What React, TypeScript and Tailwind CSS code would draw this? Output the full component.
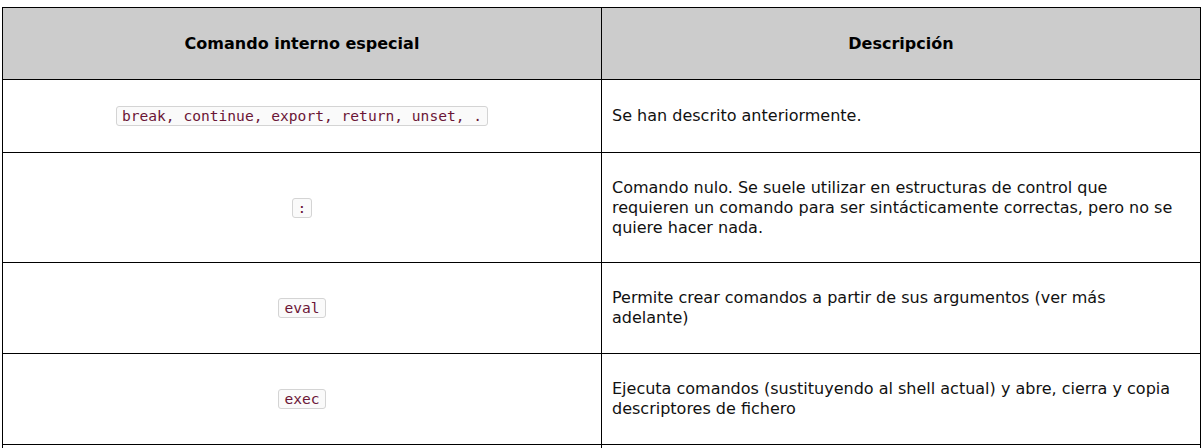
import React from "react";

const Code = ({ children }: { children: React.ReactNode }) => (
  <code className="inline-block rounded-[3px] border border-[#d4d4d4] bg-[#fafafa] px-[5px] text-[14.6px] leading-[18px] text-[#6b1536] [font-family:'DejaVu_Sans_Mono',monospace]">
    {children}
  </code>
);

const rows: { cmd: string; desc: React.ReactNode; h: string }[] = [
  { cmd: "break, continue, export, return, unset, .", desc: "Se han descrito anteriormente.", h: "h-[73px]" },
  {
    cmd: ":",
    desc: (
      <>
        Comando nulo. Se suele utilizar en estructuras de control que
        <br />
        requieren un comando para ser sintácticamente correctas, pero no se
        <br />
        quiere hacer nada.
      </>
    ),
    h: "h-[110px]",
  },
  {
    cmd: "eval",
    desc: (
      <>
        Permite crear comandos a partir de sus argumentos (ver más
        <br />
        adelante)
      </>
    ),
    h: "h-[91px]",
  },
  {
    cmd: "exec",
    desc: (
      <>
        Ejecuta comandos (sustituyendo al shell actual) y abre, cierra y copia
        <br />
        descriptores de fichero
      </>
    ),
    h: "h-[91px]",
  },
];

export default function App() {
  return (
    <div className="h-[448px] overflow-hidden bg-white pl-[2px] pt-[7px] text-[16px] leading-[20px] text-[#111] [font-family:'DejaVu_Sans',Verdana,sans-serif]">
      <table className="w-[1199px] table-fixed border-collapse">
        <thead>
          <tr className="bg-[#cccccc]">
            <th className="h-[72px] w-[599px] border border-black px-[10px] py-0 text-center font-bold text-black">
              Comando interno especial
            </th>
            <th className="h-[72px] border border-black px-[10px] py-0 text-center font-bold text-black">
              Descripción
            </th>
          </tr>
        </thead>
        <tbody>
          {rows.map((r, i) => (
            <tr key={i}>
              <td className={`${r.h} border border-black px-[10px] py-0 text-center align-middle`}>
                <Code>{r.cmd}</Code>
              </td>
              <td className={`${r.h} border border-black px-[10px] py-0 text-left align-middle`}>{r.desc}</td>
            </tr>
          ))}
          <tr>
            <td className="h-[60px] border border-black" />
            <td className="h-[60px] border border-black" />
          </tr>
        </tbody>
      </table>
    </div>
  );
}
